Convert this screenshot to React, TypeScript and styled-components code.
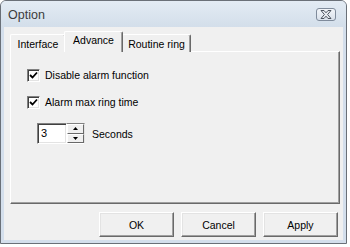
import React from "react";
import styled, { createGlobalStyle } from "styled-components";

const Global = createGlobalStyle`
  html, body { margin: 0; padding: 0; background: #ffffff; }
  body { font-family: "Liberation Sans", Arial, sans-serif; font-size: 10.5px; color: #000; }
`;

const Window = styled.div`
  width: 347px;
  height: 244px;
  box-sizing: border-box;
  border: 1px solid #6a7078;
  border-radius: 6px 6px 0 0;
  background: #d4dfec;
  display: flex;
  flex-direction: column;
`;

const TitleBar = styled.div`
  height: 26px;
  flex: none;
  display: flex;
  align-items: center;
  justify-content: space-between;
  padding: 0 10px 0 7px;
  border-radius: 5px 5px 0 0;
  background: linear-gradient(#e3ebf4, #d3deea);
`;

const Title = styled.span`
  font-size: 12.5px;
  color: #3c3c3c;
  padding-top: 1px;
`;

const CloseButton = styled.div`
  width: 20px;
  height: 13px;
  box-sizing: border-box;
  border: 1px solid #7f8b9b;
  border-radius: 3px;
  background: linear-gradient(#f2f5f9, #d9e1eb);
  display: flex;
  align-items: center;
  justify-content: center;
  margin-top: 1px;
`;

const Client = styled.div`
  flex: 1;
  margin: 0 3px 3px;
  background: #f0f0f0;
  display: flex;
  flex-direction: column;
  padding: 4px 3px 0 6px;
`;

const TabRow = styled.div`
  display: flex;
  align-items: flex-end;
  height: 21px;
  margin-bottom: -1px;
  position: relative;
  z-index: 1;
`;

const Tab = styled.div<{ $active?: boolean; $w: number }>`
  width: ${(p) => p.$w}px;
  height: ${(p) => (p.$active ? 21 : 18)}px;
  box-sizing: border-box;
  background: #f0f0f0;
  border-top: 1px solid #ffffff;
  border-left: 1px solid #ffffff;
  border-right: 1px solid #696969;
  box-shadow: inset -1px 0 #a0a0a0;
  border-radius: 2px 2px 0 0;
  display: flex;
  justify-content: center;
  padding-top: ${(p) => (p.$active ? 2 : 3)}px;
  margin: ${(p) => (p.$active ? "0 -1px 0 -2px" : "0")};
  position: relative;
  z-index: ${(p) => (p.$active ? 2 : 1)};
  font-size: 10.5px;
`;

const Panel = styled.div`
  height: 153px;
  box-sizing: border-box;
  border-top: 1px solid #ffffff;
  border-left: 1px solid #ffffff;
  border-right: 1px solid #696969;
  border-bottom: 1px solid #696969;
  box-shadow: inset -1px -1px #a0a0a0;
  padding: 16px 0 0 16px;
  display: flex;
  flex-direction: column;
`;

const CheckRow = styled.label<{ $gap?: number }>`
  display: flex;
  align-items: center;
  height: 14px;
  gap: 5px;
  margin-top: ${(p) => p.$gap ?? 0}px;
`;

const Box = styled.span`
  width: 13px;
  height: 13px;
  box-sizing: border-box;
  border-top: 1px solid #808080;
  border-left: 1px solid #808080;
  border-right: 1px solid #ffffff;
  border-bottom: 1px solid #ffffff;
  box-shadow: inset 1px 1px #404040, inset -1px -1px #e3e3e3;
  background: #fff;
  display: flex;
  align-items: center;
  justify-content: center;
`;

const SpinRow = styled.div`
  display: flex;
  align-items: center;
  margin: 14px 0 0 10px;
  gap: 7px;
`;

const SpinBox = styled.div`
  display: flex;
  height: 21px;
`;

const Input = styled.div`
  width: 30px;
  height: 21px;
  box-sizing: border-box;
  background: #fff;
  border-top: 1px solid #808080;
  border-left: 1px solid #808080;
  border-right: 1px solid #ffffff;
  border-bottom: 1px solid #ffffff;
  box-shadow: inset 1px 1px #404040, inset -1px -1px #e3e3e3;
  padding: 3px 0 0 3px;
  font-size: 11px;
`;

const SpinButtons = styled.div`
  width: 18px;
  display: flex;
  flex-direction: column;
  border-top: 1px solid #808080;
  border-bottom: 1px solid #ffffff;
  border-right: 1px solid #e3e3e3;
  box-sizing: border-box;
`;

const SpinBtn = styled.div`
  flex: 1;
  box-sizing: border-box;
  background: #f0f0f0;
  border-top: 1px solid #ffffff;
  border-left: 1px solid #ffffff;
  border-right: 1px solid #696969;
  border-bottom: 1px solid #696969;
  display: flex;
  align-items: center;
  justify-content: center;
`;

const ButtonRow = styled.div`
  display: flex;
  justify-content: flex-end;
  gap: 7px;
  margin-top: 8px;
  padding-right: 2px;
`;

const Button = styled.div`
  width: 75px;
  height: 25px;
  box-sizing: border-box;
  background: #f0f0f0;
  border-top: 1px solid #ffffff;
  border-left: 1px solid #ffffff;
  border-right: 1px solid #696969;
  border-bottom: 1px solid #696969;
  box-shadow: inset -1px -1px #a0a0a0, inset 1px 1px #e3e3e3;
  display: flex;
  align-items: center;
  justify-content: center;
  font-size: 10.5px;
`;

const Check = () => (
  <svg width="9" height="9" viewBox="0 0 9 9">
    <path d="M1 4 L3.5 6.5 L8 1.5" fill="none" stroke="#000" strokeWidth="1.8" />
  </svg>
);

const Arrow = ({ up }: { up?: boolean }) => (
  <svg width="5" height="3" viewBox="0 0 5 3">
    <path d={up ? "M2.5 0 L5 3 L0 3 Z" : "M0 0 L5 0 L2.5 3 Z"} fill="#000" />
  </svg>
);

export default function App() {
  return (
    <>
      <Global />
      <Window>
        <TitleBar>
          <Title>Option</Title>
          <CloseButton>
            <svg width="12" height="9" viewBox="0 0 12 9">
              <path
                d="M1 0.5 L4 0.5 L6 2.8 L8 0.5 L11 0.5 L7.6 4.5 L11 8.5 L8 8.5 L6 6.2 L4 8.5 L1 8.5 L4.4 4.5 Z"
                fill="#e8ecf1"
                stroke="#4d5560"
                strokeWidth="1"
              />
            </svg>
          </CloseButton>
        </TitleBar>
        <Client>
          <TabRow>
            <Tab $w={56}>Interface</Tab>
            <Tab $w={59} $active>
              Advance
            </Tab>
            <Tab $w={69}>Routine ring</Tab>
          </TabRow>
          <Panel>
            <CheckRow>
              <Box>
                <Check />
              </Box>
              Disable alarm function
            </CheckRow>
            <CheckRow $gap={13}>
              <Box>
                <Check />
              </Box>
              Alarm max ring time
            </CheckRow>
            <SpinRow>
              <SpinBox>
                <Input>3</Input>
                <SpinButtons>
                  <SpinBtn>
                    <Arrow up />
                  </SpinBtn>
                  <SpinBtn>
                    <Arrow />
                  </SpinBtn>
                </SpinButtons>
              </SpinBox>
              <span>Seconds</span>
            </SpinRow>
          </Panel>
          <ButtonRow>
            <Button>OK</Button>
            <Button>Cancel</Button>
            <Button>Apply</Button>
          </ButtonRow>
        </Client>
      </Window>
    </>
  );
}
